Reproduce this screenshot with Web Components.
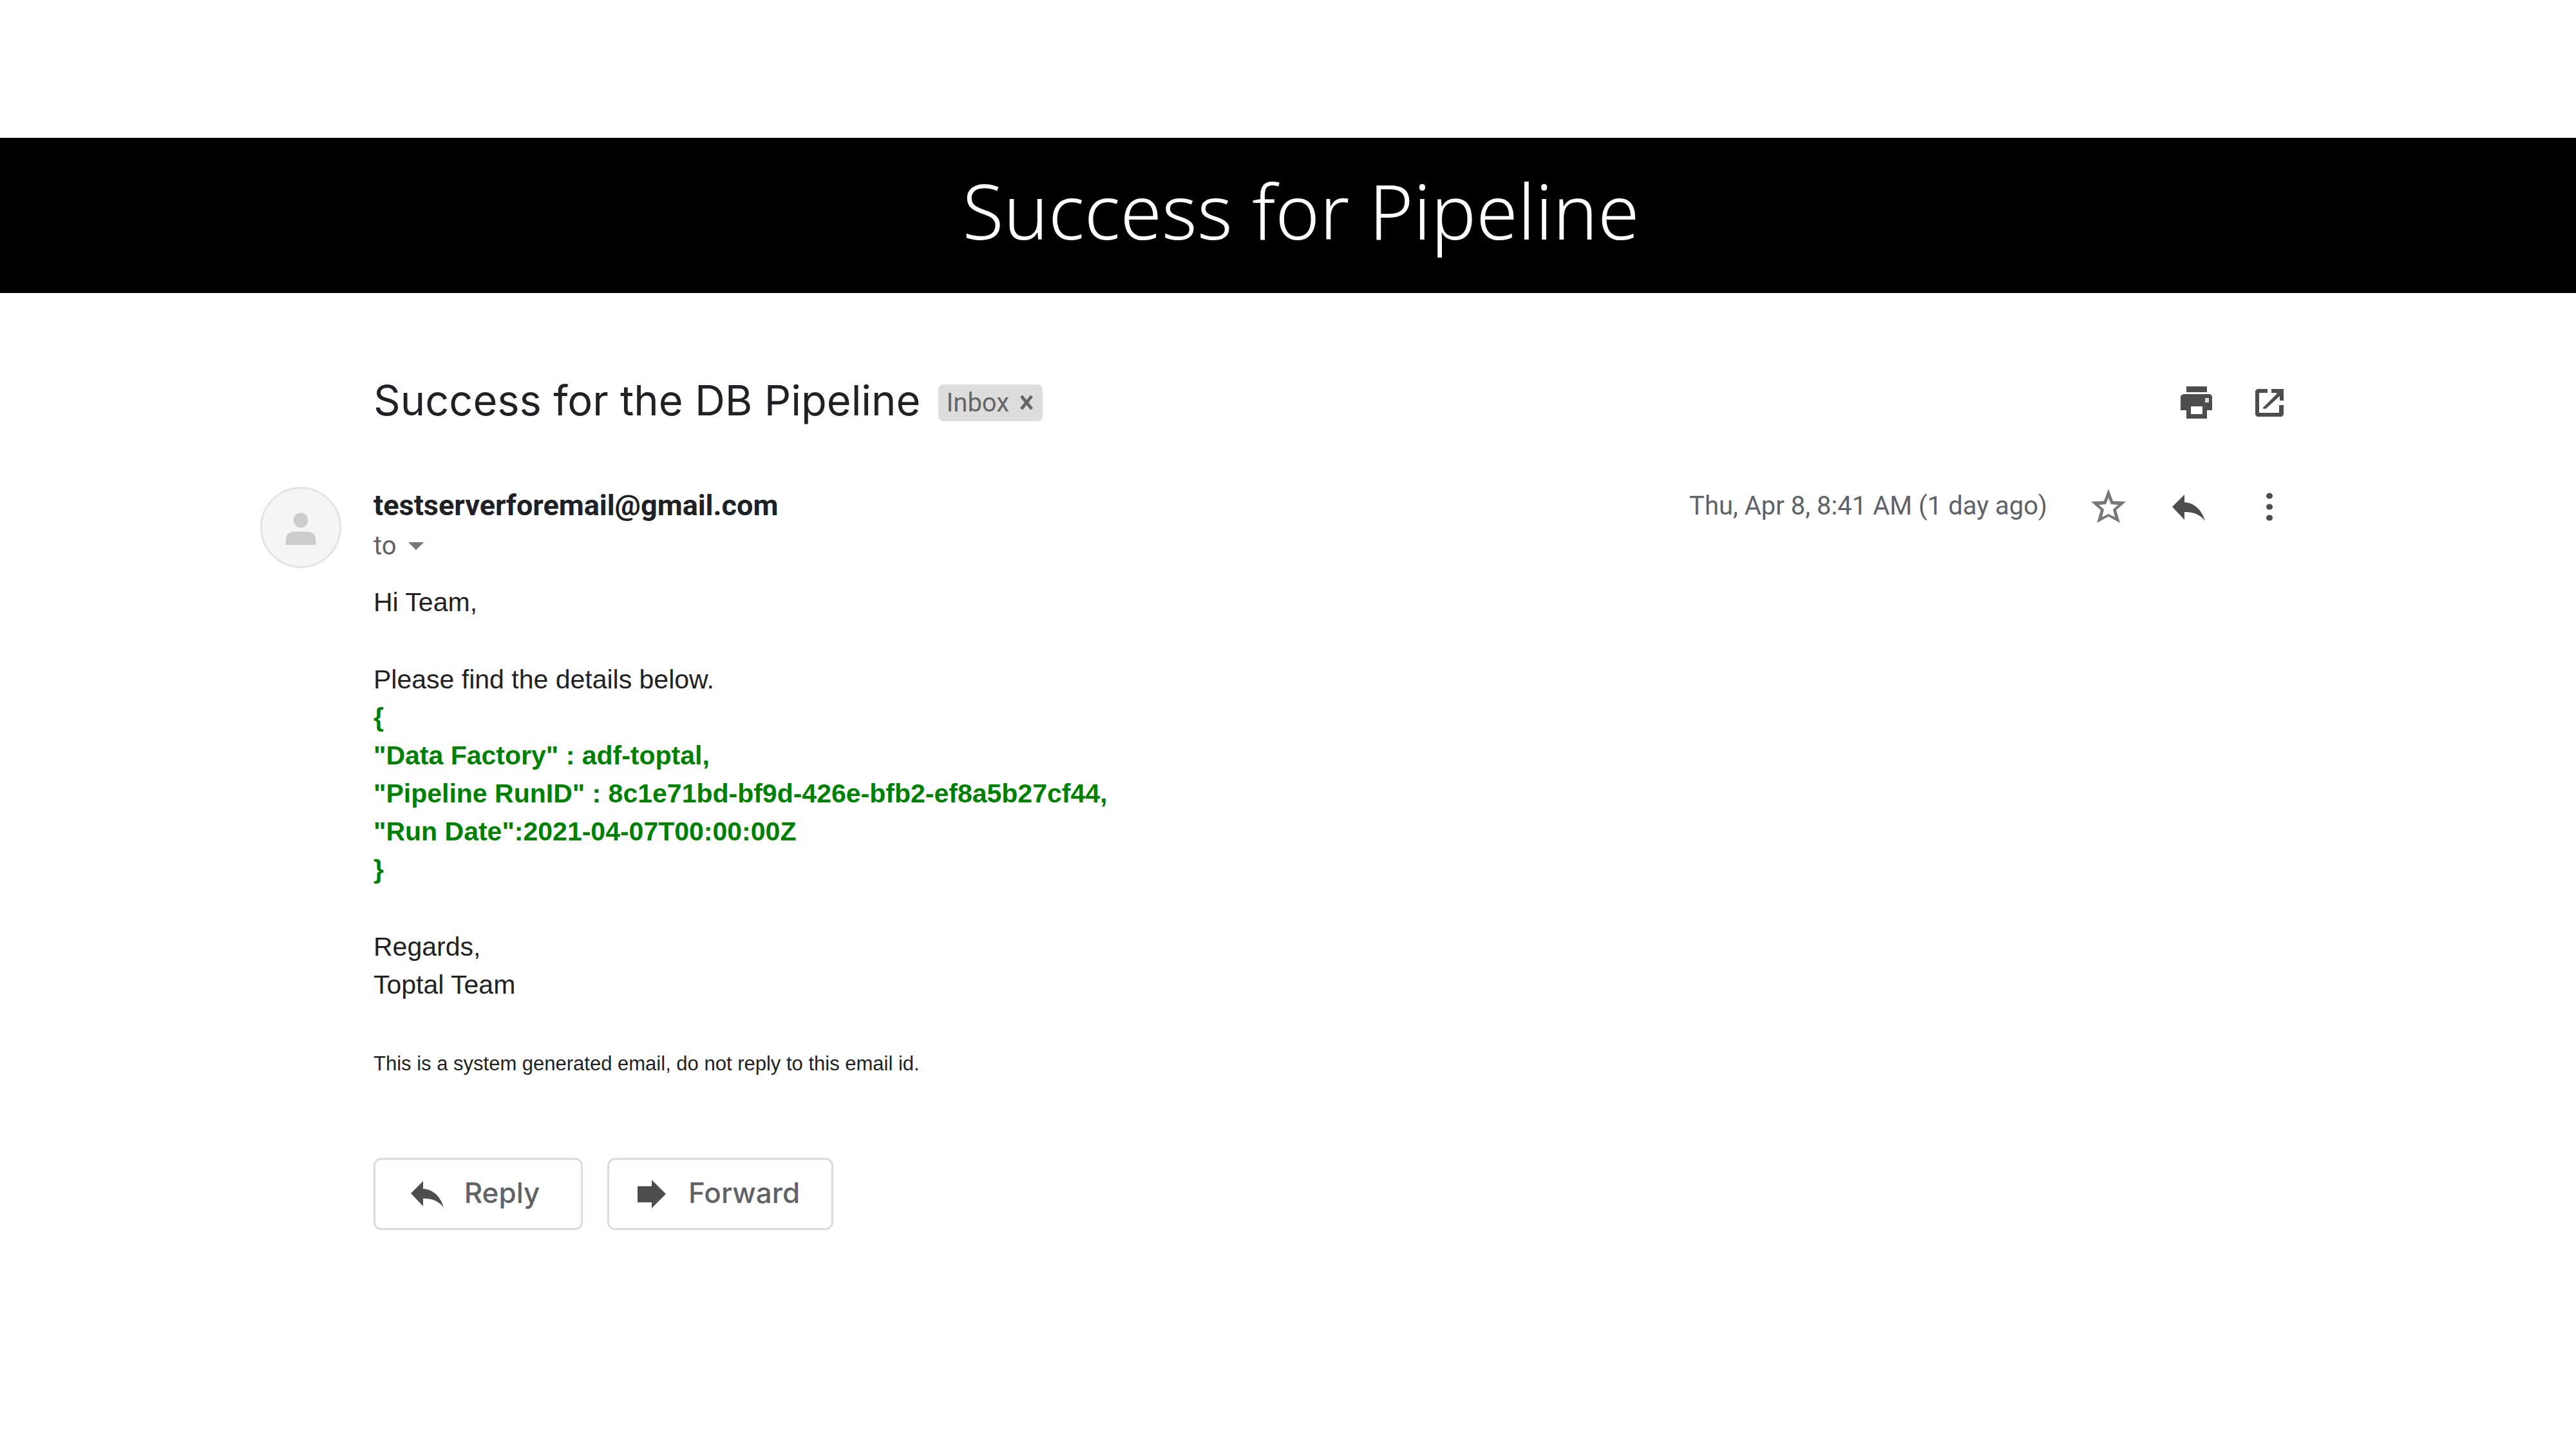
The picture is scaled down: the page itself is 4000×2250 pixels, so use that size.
<!DOCTYPE html>
<html lang="en">
<head>
<meta charset="utf-8">
<title>Success for Pipeline</title>
<style>
html, body { margin: 0; background: #fff; }
</style>
</head>
<body>
<mail-slide></mail-slide>
<script>
const ICONS = {
  print: '<path d="M14 5h32v9H14z"/><path fill-rule="evenodd" d="M9 17h42l3 3v22h-8v13H14V42H5V20zM21 36v12h18V36z"/><path fill="#dadada" d="M43 23h6v7h-6z"/>',
  open: '<path d="M27 9v6H14v31h31V34h7v15l-3 3H11l-3-3V12l3-3zM33 9h19v18h-6v-7L24 40l-5-1 23-23-2-1h-7z"/>',
  star: '<path fill-rule="evenodd" d="M30 3l7 19 20 1-15 13 6 20-18-10-18 10 6-20L3 23l20-1zM30 17l-4 10-11 1 8 7-3 12 10-5 10 5-3-12 8-7-11-1z"/>',
  reply: '<path d="M4 31L23 12v12c16 1 27 12 32 29-8-10-17-14-32-14v12z"/>',
  more: '<ellipse cx="30" cy="14" rx="5" ry="4.5"/><ellipse cx="30" cy="31" rx="5" ry="4.5"/><ellipse cx="30" cy="48" rx="5" ry="4.5"/>',
  forward: '<path d="M8 20h22V10l22 22-22 22V45H8z"/>',
  person: '<ellipse cx="30" cy="18" rx="12" ry="12.5"/><path d="M5 59V50c0-9 7-13 15-13h20c8 0 15 4 15 13v9z"/>'
};

class UiIcon extends HTMLElement {
  connectedCallback() {
    this.attachShadow({ mode: 'open' }).innerHTML = `
      <style>
        :host { display: block; flex: none; width: 60px; height: 60px; }
        svg { display: block; width: 100%; height: 100%; fill: currentColor; }
      </style>
      <svg viewBox="0 0 60 60" aria-hidden="true">${ICONS[this.getAttribute('name')]}</svg>`;
  }
}
customElements.define('ui-icon', UiIcon);

class IconButton extends HTMLElement {
  connectedCallback() {
    this.attachShadow({ mode: 'open' }).innerHTML = `
      <style>
        :host { display: block; flex: none; }
        button { display: block; padding: 0; border: 0; background: none; color: var(--icon, #4d4d4d); cursor: pointer; }
      </style>
      <button type="button" aria-label="${this.getAttribute('label')}"><ui-icon name="${this.getAttribute('icon')}"></ui-icon></button>`;
  }
}
customElements.define('icon-button', IconButton);

class SlideBanner extends HTMLElement {
  connectedCallback() {
    this.attachShadow({ mode: 'open' }).innerHTML = `
      <style>
        :host { display: block; background: #000; padding: 32px 0 48px 40px; }
        h1 { margin: 0; text-align: center; color: #fff; font: 300 117px/161px "Noto Sans", sans-serif; }
      </style>
      <h1><slot></slot></h1>`;
  }
}
customElements.define('slide-banner', SlideBanner);

class LabelChip extends HTMLElement {
  connectedCallback() {
    this.attachShadow({ mode: 'open' }).innerHTML = `
      <style>
        :host { display: flex; align-items: center; gap: 16px; height: 57px; padding: 0 14px 0 12px;
          border-radius: 8px; background: #ddd; color: #666; font: 40px/57px Roboto, sans-serif; }
        button { display: block; padding: 0; border: 0; background: none; color: inherit; cursor: pointer; }
        svg { display: block; width: 22px; height: 24px; fill: none; stroke: currentColor; stroke-width: 5; }
      </style>
      <slot></slot>
      <button type="button" aria-label="Remove label"><svg viewBox="0 0 22 24" aria-hidden="true"><path d="M3 2l16 20M19 2L3 22"/></svg></button>`;
  }
}
customElements.define('label-chip', LabelChip);

class UserAvatar extends HTMLElement {
  connectedCallback() {
    this.attachShadow({ mode: 'open' }).innerHTML = `
      <style>
        :host { display: flex; align-items: center; justify-content: center; box-sizing: border-box;
          width: 126px; height: 126px; border: 3px solid #e4e4e4; border-radius: 50%; background: #f5f5f5; color: #ccc; }
        ui-icon { width: 56px; height: 56px; }
      </style>
      <ui-icon name="person"></ui-icon>`;
  }
}
customElements.define('user-avatar', UserAvatar);

class ActionButton extends HTMLElement {
  connectedCallback() {
    this.attachShadow({ mode: 'open' }).innerHTML = `
      <style>
        :host { display: block; }
        button { display: flex; align-items: center; justify-content: center; gap: 27px; box-sizing: border-box;
          min-width: 325px; height: 112px; padding: 0 49px 4px 36px; border: 3px solid #dadce0; border-radius: 12px;
          background: #fff; color: #5f6368; font: 500 44px/56px Inter, sans-serif; cursor: pointer; }
        ui-icon { color: #4d4d4d; }
      </style>
      <button type="button"><ui-icon name="${this.getAttribute('icon')}"></ui-icon><slot></slot></button>`;
  }
}
customElements.define('action-button', ActionButton);

class MailSubject extends HTMLElement {
  connectedCallback() {
    this.attachShadow({ mode: 'open' }).innerHTML = `
      <style>
        :host { display: flex; align-items: center; gap: 28px; padding-left: 176px; }
        h2 { margin: 0; padding: 3px 0 9px; color: #202124; font: 400 65px/84px Inter, sans-serif; }
        .tools { display: flex; gap: 53px; margin-left: auto; }
      </style>
      <h2><slot></slot></h2>
      <label-chip>Inbox</label-chip>
      <div class="tools">
        <icon-button icon="print" label="Print all"></icon-button>
        <icon-button icon="open" label="In new window"></icon-button>
      </div>`;
  }
}
customElements.define('mail-subject', MailSubject);

class MailHeader extends HTMLElement {
  connectedCallback() {
    this.attachShadow({ mode: 'open' }).innerHTML = `
      <style>
        :host { display: flex; align-items: flex-start; color: #5f6368; font: 40px/52px Roboto, sans-serif; }
        user-avatar { margin-right: 50px; }
        .who { display: flex; flex-direction: column; gap: 8px; }
        h3 { margin: 0; color: #202124; font: 700 45px/58px Roboto, sans-serif; }
        .to { display: flex; align-items: center; gap: 18px; padding: 0; border: 0; background: none;
          color: inherit; font: inherit; cursor: pointer; }
        .to svg { display: block; width: 24px; height: 12px; fill: #777; }
        .meta { display: flex; align-items: center; gap: 65px; height: 60px; margin-left: auto; }
        .star { --icon: #777; }
      </style>
      <user-avatar></user-avatar>
      <div class="who">
        <h3>testserverforemail@gmail.com</h3>
        <button class="to" type="button">to<svg viewBox="0 0 24 12" aria-hidden="true"><path d="M0 0h24L12 12z"/></svg></button>
      </div>
      <div class="meta">
        <time datetime="2021-04-08T08:41">Thu, Apr 8, 8:41 AM (1 day ago)</time>
        <icon-button class="star" icon="star" label="Star"></icon-button>
        <icon-button icon="reply" label="Reply"></icon-button>
        <icon-button icon="more" label="More"></icon-button>
      </div>`;
  }
}
customElements.define('mail-header', MailHeader);

class MailBody extends HTMLElement {
  connectedCallback() {
    this.attachShadow({ mode: 'open' }).innerHTML = `
      <style>
        :host { display: flex; flex-direction: column; gap: 61px; color: #222; font: 41px/59px "Liberation Sans", Arial, sans-serif; }
        p { margin: 0; }
        b { color: #008000; }
        small { font-size: 31px; line-height: 64px; }
      </style>
      <p>Hi Team,</p>
      <p>Please find the details below.<br>
        <b>{<br>
        "Data Factory" : adf-toptal,<br>
        "Pipeline RunID" : 8c1e71bd-bf9d-426e-bfb2-ef8a5b27cf44,<br>
        "Run Date":2021-04-07T00:00:00Z<br>
        }</b></p>
      <p>Regards,<br>Toptal Team</p>
      <small>This is a system generated email, do not reply to this email id.</small>`;
  }
}
customElements.define('mail-body', MailBody);

class MailSlide extends HTMLElement {
  connectedCallback() {
    this.attachShadow({ mode: 'open' }).innerHTML = `
      <style>
        :host { display: block; padding-top: 214px; }
        main { padding: 122px 446px 160px 404px; }
        mail-header { margin-top: 83px; }
        mail-body { margin: 24px 0 114px 176px; }
        .actions { display: flex; gap: 38px; margin-left: 176px; }
      </style>
      <slide-banner>Success for Pipeline</slide-banner>
      <main>
        <mail-subject>Success for the DB Pipeline</mail-subject>
        <mail-header></mail-header>
        <mail-body></mail-body>
        <div class="actions">
          <action-button icon="reply">Reply</action-button>
          <action-button icon="forward">Forward</action-button>
        </div>
      </main>`;
  }
}
customElements.define('mail-slide', MailSlide);
</script>
</body>
</html>
